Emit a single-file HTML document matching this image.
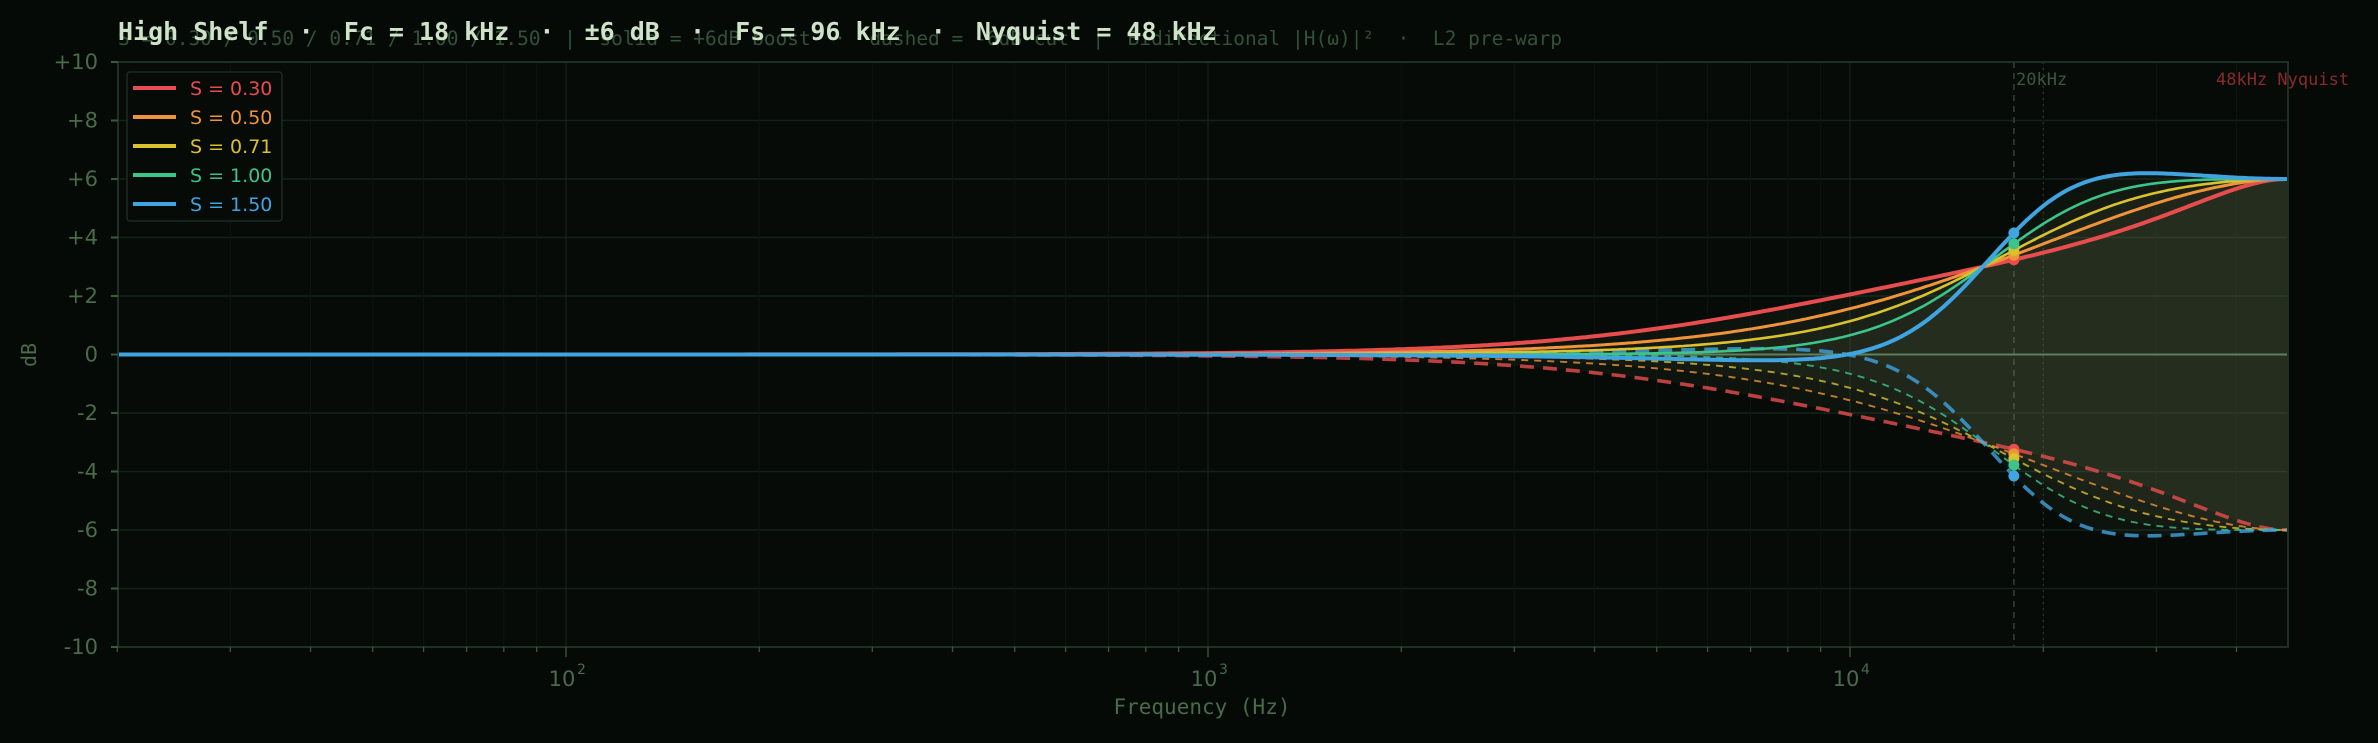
<!DOCTYPE html>
<html><head><meta charset="utf-8">
<style>
html,body{margin:0;padding:0;background:#050a07;}
svg{display:block}
</style></head>
<body>
<svg id="s" width="2378" height="743" xmlns="http://www.w3.org/2000/svg">
<rect width="2378" height="743" fill="#050a07"/>
<rect x="118" y="62" width="2170" height="585" fill="#060b08"/>
<g id="grid"></g>
<g id="fills"></g>
<g id="curves"></g>
<g id="marks"></g>
<rect x="118" y="62" width="2170" height="585" fill="none" stroke="#1f2f21" stroke-width="2"/>
<g id="axes" font-family="DejaVu Sans, Liberation Sans, sans-serif" fill="#4a6a4a"></g>
<text x="118" y="45" font-family="DejaVu Sans Mono, Liberation Mono, monospace" font-size="19.5" fill="#34503a" xml:space="preserve">S = 0.30 / 0.50 / 0.71 / 1.00 / 1.50  |  solid = +6dB boost  ·  dashed = -6dB cut  |  Bidirectional |H(ω)|²  ·  L2 pre-warp</text>
<text x="118" y="40" font-family="DejaVu Sans Mono, Liberation Mono, monospace" font-weight="bold" font-size="25" fill="#cfe3c8" xml:space="preserve">High Shelf  ·  Fc = 18 kHz  ·  ±6 dB  ·  Fs = 96 kHz  ·  Nyquist = 48 kHz</text>
<text x="2016" y="85" font-family="DejaVu Sans Mono, monospace" font-size="17" fill="#3d553f">20kHz</text>
<text x="2216" y="85" font-family="DejaVu Sans Mono, monospace" font-size="17" fill="#8a2a2a">48kHz Nyquist</text>
<g id="legend" font-family="DejaVu Sans, Liberation Sans, sans-serif" font-size="19"></g>
</svg>
<script>
var NS="http://www.w3.org/2000/svg";
function el(p,t,a,txt){var e=document.createElementNS(NS,t);for(var k in a)e.setAttribute(k,a[k]);if(txt!=null)e.textContent=txt;document.getElementById(p).appendChild(e);return e;}
var L=118,R=2288,T=62,B=647;
function X(f){return 566+642*(Math.log10(f)-2);}
function Y(d){return 354.5-d*29.25;}
for(var d=-10;d<=10;d+=2){el("grid","line",{x1:L,x2:R,y1:Y(d),y2:Y(d),stroke:"#14231a","stroke-width":1.5});}
for(var e=1;e<=4;e++)for(var m=1;m<10;m++){var f=m*Math.pow(10,e);if(f<20||f>48000)continue;var x=X(f);
 el("grid","line",{x1:x,x2:x,y1:T,y2:B,stroke:m==1?"#17271a":"#0c150e","stroke-width":1});
 el("axes","line",{x1:x,x2:x,y1:B,y2:B+(m==1?10:5),stroke:"#3a5a3c","stroke-width":1.3});}
el("grid","line",{x1:X(18000),x2:X(18000),y1:T,y2:B,stroke:"#3a3f3a","stroke-width":1.5,"stroke-dasharray":"6,5"});
el("grid","line",{x1:X(20000),x2:X(20000),y1:T,y2:B,stroke:"#2a352b","stroke-width":1.2,"stroke-dasharray":"2,4"});
for(var d=-10;d<=10;d+=2){var s=(d>0?"+":"")+d;el("axes","line",{x1:L-7,x2:L,y1:Y(d),y2:Y(d),stroke:"#3a5a3c","stroke-width":2});
 el("axes","text",{x:98,y:Y(d)+7,"text-anchor":"end","font-size":21},s);}
[[2,566],[3,1208],[4,1850]].forEach(function(p){el("axes","text",{x:p[1]-4,y:686,"text-anchor":"middle","font-size":21},"10");
 el("axes","text",{x:p[1]+11,y:674,"font-size":14},String(p[0]));});
el("axes","text",{x:1202,y:714,"text-anchor":"middle","font-size":21,"font-family":"DejaVu Sans Mono, monospace"},"Frequency (Hz)");
el("axes","text",{x:36,y:355,"text-anchor":"middle","font-size":20,"font-family":"DejaVu Sans Mono, monospace",transform:"rotate(-90 36 355)"},"dB");
var fs=96000,f0=16100;
function mag(g,S,f){var A=Math.pow(10,g/40),w0=2*Math.PI*f0/fs,c=Math.cos(w0),sn=Math.sin(w0);
 var al=sn/2*Math.sqrt((A+1/A)*(1/S-1)+2),sa=2*Math.sqrt(A)*al;
 var b0=A*((A+1)+(A-1)*c+sa),b1=-2*A*((A-1)+(A+1)*c),b2=A*((A+1)+(A-1)*c-sa);
 var a0=(A+1)-(A-1)*c+sa,a1=2*((A-1)-(A+1)*c),a2=(A+1)-(A-1)*c-sa;
 var w=2*Math.PI*f/fs,c1=Math.cos(w),s1=Math.sin(w),c2=Math.cos(2*w),s2=Math.sin(2*w);
 var nr=b0+b1*c1+b2*c2,ni=-(b1*s1+b2*s2),dr=a0+a1*c1+a2*c2,di=-(a1*s1+a2*s2);
 return 10*Math.log10((nr*nr+ni*ni)/(dr*dr+di*di));}
var Ss=[0.3,0.5,0.71,1.0,1.5],cols=["#e84d4d","#f0943a","#d9c22e","#3dc48a","#3fa4e0"],wd=[4,3,2.6,2.6,4];
var lb=["S = 0.30","S = 0.50","S = 0.71","S = 1.00","S = 1.50"];
function path(g,S){var p="";for(var i=0;i<=600;i++){var f=20*Math.pow(48000/20,i/600);if(f>47990)f=47990;p+=(i?"L":"M")+X(f).toFixed(1)+","+Y(mag(g,S,f)).toFixed(1);}return p;}
Ss.forEach(function(S,i){[6,-6].forEach(function(g){
 el("fills","path",{d:path(g,S)+"L"+R+","+Y(0)+"L"+L+","+Y(0)+"Z",fill:"rgba(110,125,85,0.07)"});});});
el("curves","line",{x1:L,x2:R,y1:Y(0),y2:Y(0),stroke:"#5f805f","stroke-width":2});
Ss.forEach(function(S,i){
 el("curves","path",{d:path(-6,S),fill:"none",stroke:cols[i],"stroke-width":(i==0||i==4)?3.6:1.9,"stroke-dasharray":(i==0||i==4)?"14,9":"7,6",opacity:0.8});});
Ss.forEach(function(S,i){
 el("curves","path",{d:path(6,S),fill:"none",stroke:cols[i],"stroke-width":wd[i]});});
Ss.forEach(function(S,i){[6,-6].forEach(function(g){el("marks","circle",{cx:X(18000),cy:Y(mag(g,S,18000)),r:5.5,fill:cols[i]});});});
el("legend","rect",{x:127,y:72,width:155,height:149,rx:3,fill:"#060b08",stroke:"#1d2b1f","stroke-width":1.5});
lb.forEach(function(t,i){var y=88+i*29;el("legend","line",{x1:133,x2:176,y1:y,y2:y,stroke:cols[i],"stroke-width":4});
 el("legend","text",{x:190,y:y+7,fill:cols[i]},t);});
</script>
</body></html>
